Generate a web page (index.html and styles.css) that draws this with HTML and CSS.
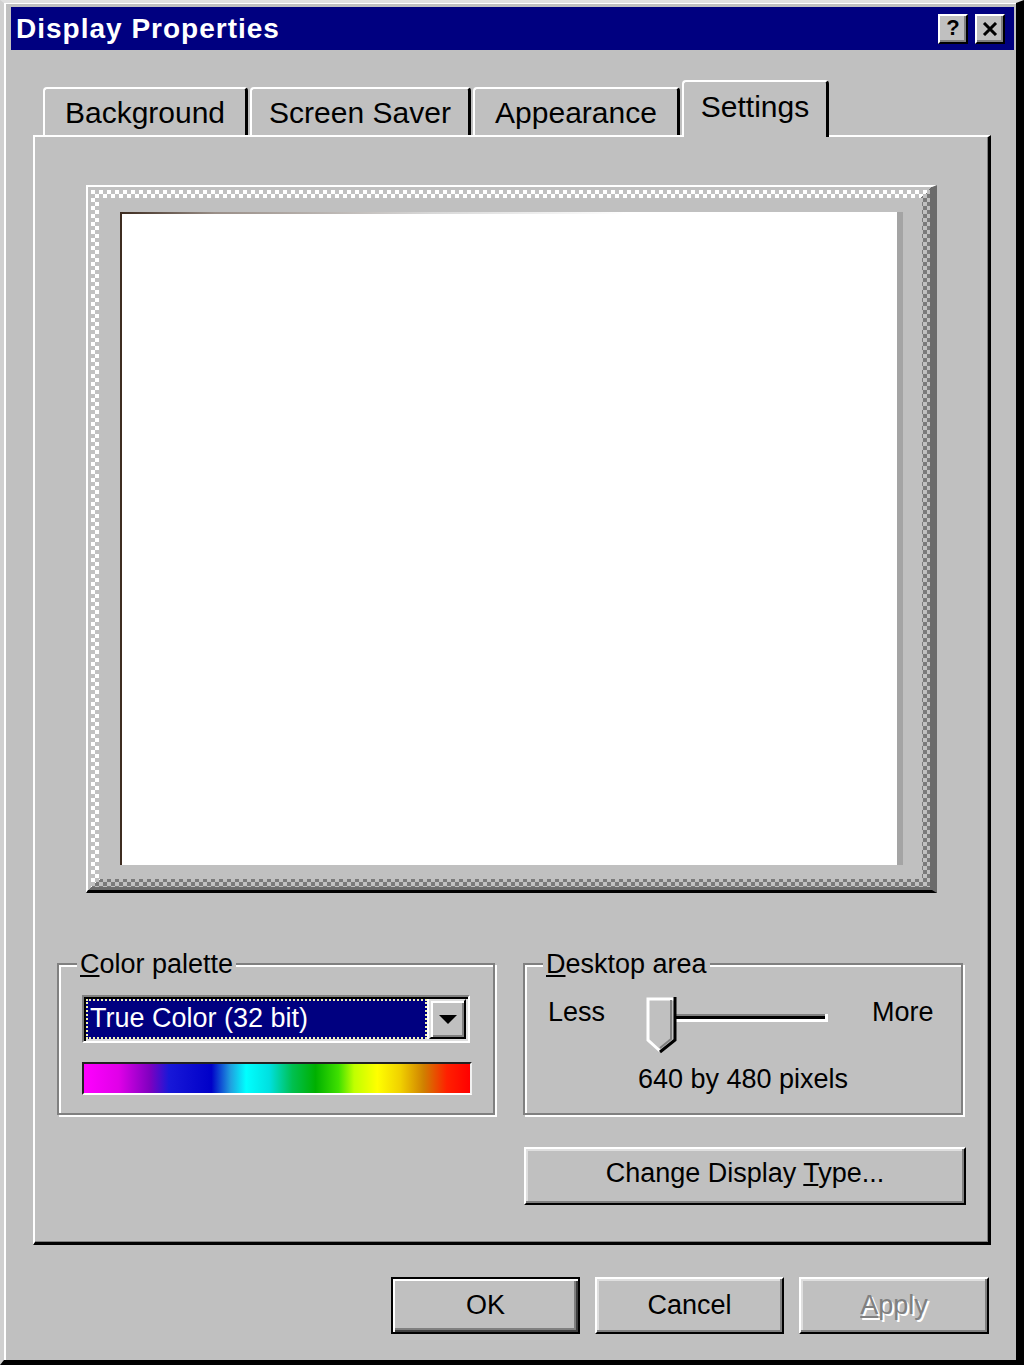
FILE: index.html
```html
<!DOCTYPE html>
<html lang="en">
<head>
<meta charset="utf-8">
<title>Display Properties</title>
<link rel="stylesheet" href="styles.css">
</head>
<body>
<div class="window">
  <div class="inner">
    <div class="titlebar">
      <span class="title">Display Properties</span>
      <div class="title-btns">
        <span class="tbtn tbtn-help">?</span>
        <span class="tbtn">
          <svg width="16" height="14" viewBox="0 0 16 14"><path d="M2 1 L14 13 M14 1 L2 13" stroke="#000" stroke-width="3" fill="none"/></svg>
        </span>
      </div>
    </div>

    <div class="tabs">
      <div class="tab tab-bg">Background</div>
      <div class="tab tab-ss">Screen Saver</div>
      <div class="tab tab-ap">Appearance</div>
      <div class="tab tab-active">Settings</div>
    </div>

    <div class="panel">
      <div class="monitor">
        <div class="checker">
          <div class="well">
            <div class="screen"></div>
          </div>
        </div>
      </div>

      <div class="groups">
        <fieldset class="group group-color">
          <legend><u>C</u>olor palette</legend>
          <div class="combo">
            <div class="combo-sel"><span>True Color (32 bit)</span></div>
            <div class="combo-btn">
              <svg width="18" height="9" viewBox="0 0 18 9"><path d="M0 0 H18 L9 9 Z" fill="#000"/></svg>
            </div>
          </div>
          <div class="spectrum"></div>
        </fieldset>

        <fieldset class="group group-desk">
          <legend><u>D</u>esktop area</legend>
          <div class="slider-row">
            <span class="slider-label">Less</span>
            <svg class="slider" width="186" height="58" viewBox="0 0 186 58">
              <rect x="12" y="18" width="171" height="2" fill="#808080"/>
              <rect x="12" y="20" width="169" height="3" fill="#000"/>
              <rect x="12" y="23" width="171" height="3" fill="#fff"/>
              <rect x="180" y="18" width="3" height="8" fill="#fff"/>
              <polygon points="2,2 30,2 30,44 15,56 2,44" fill="#c0c0c0"/>
              <polyline points="15,55 3,44 3,3 29,3" fill="none" stroke="#fff" stroke-width="3"/>
              <polyline points="26,4 26,43 15,52" fill="none" stroke="#808080" stroke-width="2"/>
              <polyline points="30,1 30,44 15,56" fill="none" stroke="#000" stroke-width="3"/>
            </svg>
            <span class="slider-label">More</span>
          </div>
          <div class="caption">640 by 480 pixels</div>
        </fieldset>
      </div>

      <div class="change-row">
        <div class="btn btn-change"><span>Change Display <u>T</u>ype...</span></div>
      </div>
    </div>

    <div class="actions">
      <div class="btn btn-default">OK</div>
      <div class="btn">Cancel</div>
      <div class="btn btn-disabled"><span><u>A</u>pply</span></div>
    </div>
  </div>
</div>
</body>
</html>
```

FILE: styles.css
```css
html, body {
  margin: 0;
  padding: 0;
  background: #c0c0c0;
}

body {
  font-family: "Liberation Sans", Arial, sans-serif;
  color: #000;
}

.window {
  width: 1024px;
  height: 1365px;
  box-sizing: border-box;
  background: #c0c0c0;
  border-top: 3px solid #e0e0e0;
  border-left: 4px solid #d0d0d0;
  border-right: 8px solid #000;
  border-bottom: 5px solid #000;
  overflow: hidden;
}

.inner {
  height: 100%;
  box-sizing: border-box;
  border-left: 2px solid #fff;
  border-top: 1px solid #fff;
}

/* Title bar */
.titlebar {
  margin: 3px 2px 0 5px;
  height: 43px;
  background: #000080;
  display: flex;
  align-items: center;
  justify-content: space-between;
  padding: 0 9px 0 5px;
}

.title {
  color: #fff;
  font-weight: bold;
  font-size: 28px;
  letter-spacing: 1px;
  line-height: 32px;
}

.title-btns {
  display: flex;
  gap: 7px;
}

.tbtn {
  width: 30px;
  height: 30px;
  box-sizing: border-box;
  background: #c0c0c0;
  border: 2px solid;
  border-color: #fff #000 #000 #fff;
  box-shadow: inset -2px -2px 0 #808080;
  display: flex;
  align-items: center;
  justify-content: center;
}

.tbtn-help {
  font-weight: bold;
  font-size: 22px;
  line-height: 1;
  padding-bottom: 2px;
}

/* Tabs */
.tabs {
  margin-top: 30px;
  padding-left: 37px;
  height: 55px;
  display: flex;
  align-items: flex-end;
  gap: 2px;
}

.tab {
  height: 48px;
  box-sizing: border-box;
  border-top: 2px solid #fff;
  border-left: 2px solid #fff;
  border-right: 3px solid #000;
  border-radius: 4px 4px 0 0;
  display: flex;
  align-items: center;
  justify-content: center;
  font-size: 30px;
  padding-top: 2px;
  background: #c0c0c0;
}

.tab-bg { width: 205px; }
.tab-ss { width: 221px; }
.tab-ap { width: 207px; }

.tab-active {
  width: 147px;
  height: 57px;
  margin-bottom: -2px;
  padding-top: 0;
  padding-bottom: 6px;
  position: relative;
  z-index: 1;
}

/* Panel */
.panel {
  margin-left: 27px;
  width: 958px;
  height: 1110px;
  box-sizing: border-box;
  border-top: 2px solid #fff;
  border-left: 2px solid #fff;
  border-right: 3px solid #000;
  border-bottom: 3px solid #000;
  box-shadow: inset -1px -1px 0 #808080;
}

/* Monitor preview */
.monitor {
  margin: 48px 0 0 51px;
  width: 851px;
  height: 708px;
  box-sizing: border-box;
  border-top: 2px solid #fff;
  border-left: 2px solid #fff;
  border-right: 5px solid #6b6b6b;
  border-bottom: 3px solid #000;
  padding: 3px 2px 3px 3px;
  background: linear-gradient(to bottom right, #c0c0c0 50%, #6b6b6b 50%);
}

.checker {
  height: 100%;
  box-sizing: border-box;
  padding: 8px;
  background:
    repeating-conic-gradient(#c0c0c0 0 25%, transparent 0 50%) 0 0 / 8px 8px,
    linear-gradient(to bottom right, #fff 50%, #7a7a7a 50%);
}

.well {
  height: 100%;
  box-sizing: border-box;
  background: #c0c0c0;
  padding: 14px 19px 14px 21px;
}

.screen {
  height: 100%;
  box-sizing: border-box;
  border-left: 2px solid #3e2c20;
  border-right: 6px solid #a4a4a4;
  background:
    linear-gradient(90deg, #3e2c20 0, #9a8f88 12%, #d8d8d8 40%, #fff 65%) top left / 100% 2px no-repeat,
    #fff;
}

/* Group boxes */
.groups {
  margin-top: 55px;
  padding-left: 22px;
  display: flex;
  gap: 28px;
}

.group {
  margin: 0;
  padding: 0;
  min-width: 0;
  height: 167px;
  box-sizing: border-box;
  border: 2px solid #808080;
  box-shadow: inset 2px 2px 0 #fff, 2px 2px 0 #fff;
  font-size: 27px;
}

.group-color { width: 438px; }
.group-desk { width: 440px; }

.group legend {
  margin-left: 18px;
  padding: 0 3px;
  line-height: 32px;
  background: #c0c0c0;
}

.combo {
  margin: 15px 0 0 23px;
  width: 388px;
  height: 48px;
  box-sizing: border-box;
  border: 2px solid;
  border-color: #808080 #fff #fff #808080;
  box-shadow: inset 2px 2px 0 #000, inset -2px -2px 0 #dfdfdf;
  background: #fff;
  padding: 2px;
  display: flex;
  gap: 2px;
}

.combo-sel {
  flex: 1;
  background: #000080;
  border: 2px dotted #f4f4b0;
  display: flex;
  align-items: center;
  padding: 0 0 2px 2px;
  color: #fff;
  line-height: 1;
}

.combo-btn {
  width: 37px;
  box-sizing: border-box;
  background: #c0c0c0;
  border: 2px solid;
  border-color: #dfdfdf #000 #000 #dfdfdf;
  box-shadow: inset 2px 2px 0 #fff, inset -2px -2px 0 #808080;
  display: flex;
  align-items: center;
  justify-content: center;
}

.spectrum {
  margin: 19px 0 0 23px;
  width: 390px;
  height: 33px;
  box-sizing: border-box;
  border: 2px solid;
  border-color: #202020 #f0f0f0 #fff #202020;
  background: linear-gradient(90deg,
    #ff00ff 0%, #e000e8 9%, #8000c0 17%, #1818d8 22%, #0000c8 33%,
    #20a0e0 38%, #00ffff 42%, #00e0e0 48%, #00c050 54%, #00b000 60%,
    #40e000 66%, #c0ff00 70%, #ffff00 76%, #f0d000 82%, #d08000 88%,
    #ff2000 94%, #ff0000 100%);
}

.slider-row {
  margin-top: 16px;
  padding-left: 23px;
  display: flex;
  align-items: flex-start;
}

.slider-label {
  line-height: 32px;
}

.slider {
  display: block;
  margin: 0 41px 0 40px;
}

.caption {
  margin-top: 9px;
  text-align: center;
  line-height: 32px;
}

/* Buttons */
.change-row {
  margin-top: 32px;
  padding-right: 22px;
  display: flex;
  justify-content: flex-end;
}

.btn {
  width: 189px;
  height: 57px;
  box-sizing: border-box;
  background: #c0c0c0;
  border: 2px solid;
  border-color: #fff #000 #000 #fff;
  box-shadow: inset -2px -2px 0 #808080, inset 2px 2px 0 #dfdfdf;
  display: flex;
  align-items: center;
  justify-content: center;
  font-size: 27px;
  line-height: 1;
}

.btn-change {
  width: 442px;
  height: 58px;
  padding-bottom: 6px;
}

.actions {
  margin-top: 32px;
  padding-right: 27px;
  display: flex;
  justify-content: flex-end;
  gap: 15px;
}

.btn-default {
  border-color: #000;
  box-shadow: inset 2px 2px 0 #fff, inset -2px -2px 0 #404040, inset -4px -4px 0 #808080;
}

.btn-disabled {
  width: 190px;
  color: #808080;
  text-shadow: 2px 2px 0 #fff;
}
```
